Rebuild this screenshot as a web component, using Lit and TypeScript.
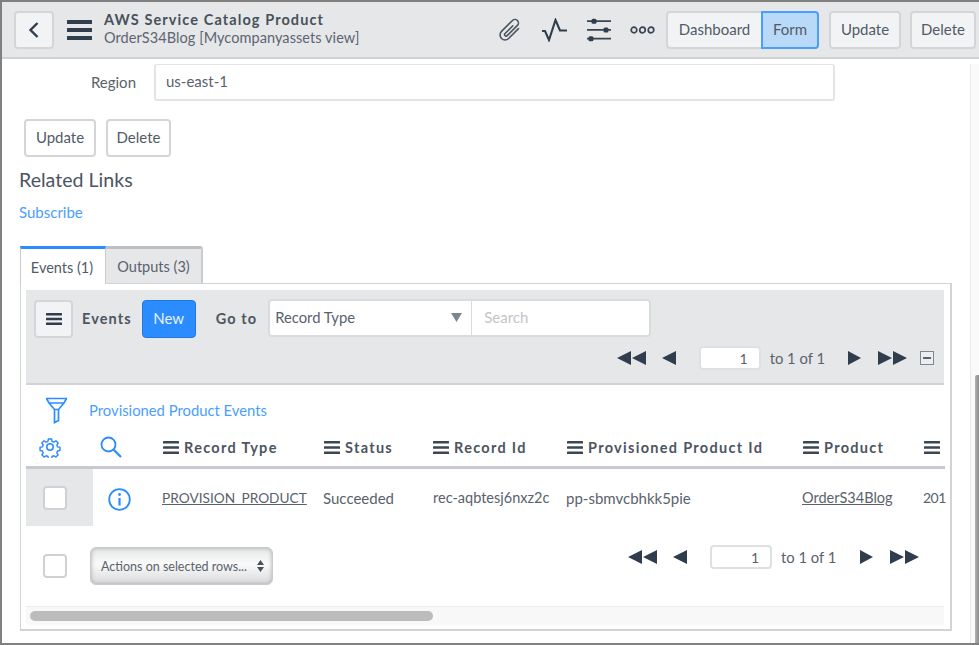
import { LitElement, html, css, svg } from "lit";
import { customElement } from "lit/decorators.js";

const ham = (w = 16, h = 13, c = "#3b4653", t = 2.6) => {
  const g = (h - 3 * t) / 2;
  return html`<svg class="ham" width=${w} height=${h} viewBox="0 0 ${w} ${h}">
    ${[0, 1, 2].map((i) => svg`<rect x="0" y=${i * (t + g)} width=${w} height=${t} rx="0.5" fill=${c}></rect>`)}
  </svg>`;
};

const pager = () => html`
  <svg class="arrows" width="29" height="16" viewBox="0 0 29 16"><path d="M0 8 14 1V15ZM15 8 29 1V15Z" fill="#2f3d4d"/></svg>
  <svg class="one one-prev" width="14" height="16" viewBox="0 0 14 16"><path d="M0 8 14 1V15Z" fill="#2f3d4d"/></svg>
  <span class="pg-input">1</span>
  <span class="pg-text">to 1 of 1</span>
  <svg class="one one-next" width="13" height="16" viewBox="0 0 13 16"><path d="M13 8 0 1V15Z" fill="#2f3d4d"/></svg>
  <svg class="arrows arrows-next" width="29" height="16" viewBox="0 0 29 16"><path d="M14 8 0 1V15ZM29 8 15 1V15Z" fill="#2f3d4d"/></svg>
`;

@customElement("app-root")
export class AppRoot extends LitElement {
  static styles = css`
    :host {
      display: flex;
      flex-direction: column;
      box-sizing: border-box;
      width: 979px;
      height: 645px;
      overflow: hidden;
      border-top: 2px solid #808080;
      border-left: 2px solid #808080;
      border-bottom: 2px solid #808080;
      background: #fff;
      font-family: "Lato", "Liberation Sans", sans-serif;
      font-size: 15px;
      color: #4c5560;
    }
    * { box-sizing: border-box; }
    svg { display: block; flex: none; }

    .hdr {
      flex: none;
      height: 57px;
      display: flex;
      align-items: center;
      background: #e6e7e9;
      border-bottom: 2px solid #cfd1d4;
      padding: 0 3px 0 12px;
    }
    .btn {
      display: flex;
      align-items: center;
      justify-content: center;
      height: 38px;
      padding-bottom: 2px;
      border: 2px solid #d3d5d8;
      border-radius: 4px;
      background: #f2f3f5;
      color: #515b66;
      font-size: 15px;
    }
    .back { width: 40px; margin-right: 13px; padding-bottom: 0; }
    .titles { margin-left: 12px; line-height: 18px; flex: 1; padding-bottom: 1px; }
    .t1 { font-weight: 700; color: #47515c; letter-spacing: 1.1px; font-size: 14.5px; }
    .t2 { color: #5c6570; font-size: 14.5px; letter-spacing: 0.07px; }
    .ico { margin-right: 19px; }
    .clip { margin-right: 18px; }
    .seg { display: flex; margin-left: -8px; }
    .seg .btn:first-child { width: 95px; border-radius: 4px 0 0 4px; border-right: 0; }
    .seg .on { width: 58px; border: 2px solid #4a9eff; border-radius: 0 4px 4px 0; background: #b9d9f9; }
    .up { width: 72px; margin-left: 10px; }
    .del { width: 66px; margin-left: 9px; }

    .main { flex: 1; min-height: 0; display: flex; }
    .content { flex: 1; min-width: 0; padding: 5px 0 0 18px; }
    .track {
      flex: none;
      width: 9px;
      border-left: 1px solid #e9e9e9;
      background: #fafafa;
      display: flex;
      flex-direction: column;
      padding: 311px 0 0 4px;
      margin-top: 5px;
    }
    .thumb { flex: 1; background: linear-gradient(90deg, #b4b4b4, #8a8a8a); border-radius: 2px 0 0 0; }

    .region { display: flex; align-items: center; height: 37px; }
    .region label { width: 116px; text-align: right; padding-bottom: 2px; color: #59626c; font-size: 15px; }
    .input {
      margin-left: 18px;
      width: 681px;
      height: 37px;
      padding: 0 0 2px 10px;
      display: flex;
      align-items: center;
      border: 2px solid #e3e4e6;
      border-top-width: 1px;
      border-radius: 3px;
      color: #59626c;
      font-size: 15px;
    }
    .actions { display: flex; gap: 10px; margin: 18px 0 0 4px; }
    .actions .btn { background: #fff; }
    .actions .up { margin: 0; width: 72px; }
    .actions .del { margin: 0; width: 65px; }
    h2 { margin: 11px 0 0 -1px; font-weight: 400; font-size: 19.6px; line-height: 24px; color: #4c5560; }
    .link { color: #4a9eff; }
    .sub { margin: 10px 0 0 -1px; line-height: 20px; font-size: 15px; }

    .tabs { display: flex; margin-top: 24px; height: 37px; }
    .tab {
      display: flex;
      align-items: center;
      justify-content: center;
      border-top: 3px solid #bdbfc2;
      font-size: 14.5px;
      padding-top: 1px;
    }
    .tab.a { width: 86px; padding-right: 2px; border-top-color: #2b8cff; border-left: 1px solid #ccc; color: #515b66; background: #fff; z-index: 1; margin-bottom: -1px; border-right: 1px solid #ccc; }
    .tab.b { width: 97px; background: #e6e7e9; border-right: 2px solid #c9cbce; color: #59626c; border-radius: 0 3px 0 0; }
    .panel {
      width: 932px;
      height: 348px;
      border: 1px solid #d2d3d5;
      border-width: 1px 2px 2px 1px;
      padding: 6px 6px 0 5px;
    }
    .bar {
      height: 95px;
      background: #e6e7e9;
      border-bottom: 2px solid #d0d2d5;
      padding: 9px 10px 0 8px;
    }
    .bar1 { display: flex; align-items: flex-start; height: 39px; }
    .menu { width: 39px; margin-top: 1px; padding-bottom: 0; }
    .lbl { align-self: center; font-weight: 700; letter-spacing: 1.1px; color: #4c5560; font-size: 14.5px; }
    .new {
      width: 54px;
      height: 38px;
      margin: 1px 0 0 10px;
      padding-bottom: 2px;
      display: flex;
      align-items: center;
      justify-content: center;
      background: #2b8cff;
      border: 1px solid #2079e0;
      border-radius: 4px;
      color: #e8f2ff;
      font-size: 15px;
    }
    .goto { margin: 0 11px 0 20px; }
    .sel {
      width: 204px;
      height: 38px;
      display: flex;
      align-items: center;
      justify-content: space-between;
      padding: 0 9px 2px 5px;
      background: #fff;
      border: 2px solid #d9dbdd;
      border-right: 1px solid #d9dbdd;
      border-radius: 4px 0 0 4px;
      color: #59626c;
      font-size: 14.8px;
    }
    .srch {
      width: 179px;
      height: 38px;
      display: flex;
      align-items: center;
      padding: 0 0 2px 12px;
      background: #fff;
      border: 2px solid #d9dbdd;
      border-left: 0;
      border-radius: 0 4px 4px 0;
      color: #c2c5c9;
      font-size: 15px;
    }
    .pager { display: flex; align-items: center; }
    .bar .pager { margin-top: 8px; height: 24px; padding-left: 583px; }
    .one-prev { margin-left: 16px; }
    .pg-input {
      width: 62px;
      height: 24px;
      margin-left: 23px;
      padding-right: 11px;
      display: flex;
      align-items: center;
      justify-content: flex-end;
      border: 2px solid #dfe0e2;
      border-radius: 4px;
      background: #fff;
      color: #59626c;
      font-size: 14px;
    }
    .pg-text { width: 88px; padding-left: 9px; font-size: 14.8px; color: #59626c; white-space: nowrap; }
    .arrows-next { margin-left: 17px; }
    .collapse { width: 14px; height: 14px; margin-left: 13px; border: 1.5px solid #7e8690; display: flex; align-items: center; justify-content: center; background: #eceef0; }
    .collapse i { display: block; width: 8px; height: 1.5px; background: #5b6570; }

    .filter { display: flex; align-items: center; height: 36px; margin-top: 7px; padding-left: 19px; }
    .filter span { margin-left: 21px; font-size: 14.8px; }

    .grid {
      display: grid;
      grid-template-columns: 67px 69px 161px 110px 133px 236px 121px 22px;
    }
    .th {
      height: 38px;
      margin-top: 3px;
      display: flex;
      align-items: center;
      gap: 5px;
      font-weight: 700;
      font-size: 14.5px;
      letter-spacing: 1.3px;
      color: #4c5560;
      white-space: nowrap;
      border-bottom: 3px solid #c6c9cd;
      padding-bottom: 3px;
    }
    .th.p1 { padding-left: 1px; }
    .th.c0 { padding-left: 13px; }
    .th.c1 { padding-left: 7px; }
    .td { height: 57px; display: flex; align-items: center; font-size: 15px; color: #59626c; white-space: nowrap; }
    .td.chk { background: #e6e7e9; padding: 0 0 0 17px; }
    .td.info { padding: 3px 0 0 15px; }
    .u { text-decoration: underline; }
    .td.caps { font-size: 13.7px; }
    .td.s145 { font-size: 14.5px; }
    .td.yr { font-size: 14px; letter-spacing: -0.5px; }
    .box { width: 24px; height: 24px; border: 2px solid #cfd1d4; border-radius: 4px; background: #fff; flex: none; }

    .foot { display: flex; height: 80px; padding-top: 21px; padding-left: 17px; }
    .foot .box { margin-top: 7px; }
    .acts {
      width: 183px;
      height: 38px;
      margin-left: 23px;
      display: flex;
      align-items: center;
      justify-content: space-between;
      padding: 0 8px 0 10px;
      border: 1px solid #c8cacd;
      border-radius: 6px;
      background: linear-gradient(#e6e7e8, #fafafa 45%, #d9dadc);
      box-shadow: inset 0 0 4px #aaa;
      font-size: 12.5px;
      color: #59626c;
      white-space: nowrap;
    }
    .foot .pager { margin: -2px 0 0 355px; height: 24px; }
    .hs {
      height: 19px;
      background: #f8f8f8;
      border-top: 1px solid #ececec;
      padding: 4px 0 0 4px;
    }
    .hs i { display: block; width: 403px; height: 10px; border-radius: 5px; background: #bcbcbc; }
  `;

  render() {
    const cols = ["Record Type", "Status", "Record Id", "Provisioned Product Id", "Product", ""];
    return html`
      <header class="hdr">
        <div class="btn back">
          <svg width="14" height="20" viewBox="0 0 14 20"><path d="M10.500 3 3.500 10l7 7" fill="none" stroke="#2f3d4d" stroke-width="2.400"/></svg>
        </div>
        ${ham(25, 20, "#2f3d4d", 4)}
        <div class="titles">
          <div class="t1">AWS Service Catalog Product</div>
          <div class="t2">OrderS34Blog [Mycompanyassets view]</div>
        </div>
        <svg class="clip" width="26" height="26" viewBox="0 0 26 26"><path d="M16 7V21a5 5 0 0 1-10 0V5.500a3.500 3.500 0 0 1 7 0V20a1.500 1.500 0 0 1-3 0V9" transform="translate(2 -1) rotate(45 11 14)" fill="none" stroke="#4b5562" stroke-width="1.600" stroke-linecap="round"/></svg>
        <svg class="ico" width="27" height="24" viewBox="0 0 27 24" style="margin-right:18px"><path d="M1 13h3l4 9L14.500 2 19 12.500h7" fill="none" stroke="#2f3d4d" stroke-width="2.100"/></svg>
        <svg class="ico" width="25" height="24" viewBox="0 0 25 24">
          <path d="M1 3.200h24M1 11.900h24M1 20.700h24" stroke="#3a4552" stroke-width="1.700"/>
          <rect x="5.500" y="0.700" width="5" height="5" rx="1.500" fill="#2f3d4d"/><rect x="17.500" y="9.400" width="5" height="5" rx="1.500" fill="#2f3d4d"/><rect x="2.500" y="18.200" width="5" height="5" rx="1.500" fill="#2f3d4d"/>
        </svg>
        <svg class="ico" width="25" height="8" viewBox="0 0 25 8"><g fill="none" stroke="#3a4552" stroke-width="1.700"><circle cx="4" cy="4" r="2.800"/><circle cx="12.500" cy="4" r="2.800"/><circle cx="21" cy="4" r="2.800"/></g></svg>
        <div class="seg"><div class="btn">Dashboard</div><div class="btn on">Form</div></div>
        <div class="btn up">Update</div>
        <div class="btn del">Delete</div>
      </header>
      <div class="main">
        <div class="content">
          <div class="region"><label>Region</label><div class="input">us-east-1</div></div>
          <div class="actions"><div class="btn up">Update</div><div class="btn del">Delete</div></div>
          <h2>Related Links</h2>
          <div class="link sub">Subscribe</div>
          <div class="tabs"><div class="tab a">Events (1)</div><div class="tab b">Outputs (3)</div></div>
          <section class="panel">
            <div class="bar">
              <div class="bar1">
                <div class="btn menu">${ham(16, 12, "#2f3d4d", 2.4)}</div>
                <span class="lbl" style="margin-left:9px">Events</span>
                <div class="new">New</div>
                <span class="lbl goto">Go to</span>
                <div class="sel"><span>Record Type</span><svg width="11" height="9" viewBox="0 0 11 9"><path d="M0 0h11L5.500 9Z" fill="#7d858e"/></svg></div>
                <div class="srch">Search</div>
              </div>
              <div class="pager">${pager()}<span class="collapse"><i></i></span></div>
            </div>
            <div class="filter">
              <svg width="23" height="27" viewBox="0 0 23 27"><path d="M1 1.500h21M1.500 1.500 4 6h15l2.500-4.500M4 6l5.500 6.500h4L19 6M9.500 12.500V25.500L13.500 23.500V12.500" fill="none" stroke="#2b8cff" stroke-width="1.700"/></svg>
              <span class="link">Provisioned Product Events</span>
            </div>
            <div class="grid">
              <div class="th c0"><svg width="22" height="22" viewBox="0 0 24 24"><path d="M10 2h4l.6 3 2.200.9 2.600-1.700 2.800 2.800-1.700 2.600.9 2.200 3 .6v4l-3 .6-.9 2.200 1.700 2.600-2.800 2.800-2.600-1.700-2.200.9-.6 3h-4l-.6-3-2.200-.9-2.600 1.700-2.800-2.800 1.700-2.600-.9-2.200-3-.6v-4l3-.6.9-2.200L1.800 7l2.800-2.800 2.600 1.700L9.400 5Z" transform="translate(1.500 1.500) scale(.875)" fill="none" stroke="#2b8cff" stroke-width="1.800" stroke-linejoin="round"/><circle cx="12" cy="12" r="3.500" fill="none" stroke="#2b8cff" stroke-width="1.700"/></svg></div>
              <div class="th c1"><svg width="22" height="22" viewBox="0 0 22 22"><circle cx="8.500" cy="8.500" r="7" fill="none" stroke="#2b8cff" stroke-width="1.800"/><path d="M13.500 13.500 21 21" stroke="#2b8cff" stroke-width="2.200"/></svg></div>
              ${cols.map((c, i) => html`<div class="th ${i === 2 ? "" : "p1"}">${ham(16, 13, "#3b4653", 2.6)}${c}</div>`)}
              <div class="td chk"><div class="box"></div></div>
              <div class="td info"><svg width="23" height="23" viewBox="0 0 23 23"><circle cx="11.500" cy="11.500" r="10.300" fill="none" stroke="#2b8cff" stroke-width="1.800"/><circle cx="11.500" cy="6.500" r="1.400" fill="#2b8cff"/><path d="M11.500 10v7.500" stroke="#2b8cff" stroke-width="2.200"/></svg></div>
              <div class="td caps"><span class="u">PROVISION_PRODUCT</span></div>
              <div class="td">Succeeded</div>
              <div class="td s145">rec-aqbtesj6nxz2c</div>
              <div class="td">pp-sbmvcbhkk5pie</div>
              <div class="td s145"><span class="u">OrderS34Blog</span></div>
              <div class="td yr">201</div>
            </div>
            <div class="foot">
              <div class="box"></div>
              <div class="acts"><span>Actions on selected rows...</span><svg width="7" height="12" viewBox="0 0 7 12"><path d="M3.500 0 7 5H0ZM3.500 12 0 7h7Z" fill="#47515c"/></svg></div>
              <div class="pager">${pager()}</div>
            </div>
            <div class="hs"><i></i></div>
          </section>
        </div>
        <div class="track"><div class="thumb"></div></div>
      </div>
    `;
  }
}
